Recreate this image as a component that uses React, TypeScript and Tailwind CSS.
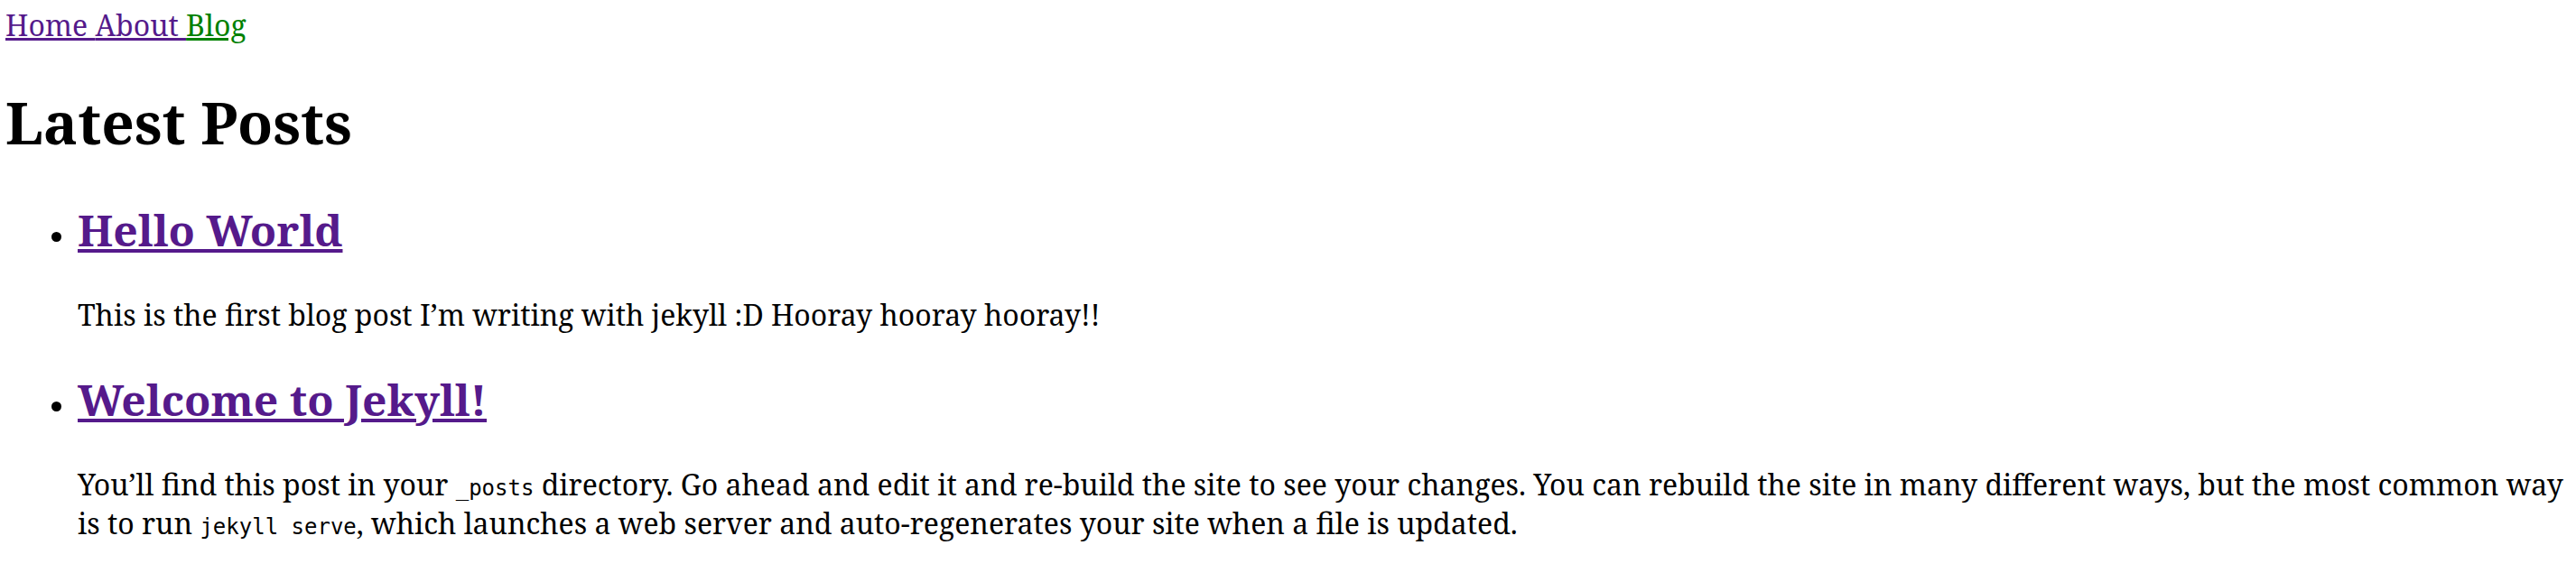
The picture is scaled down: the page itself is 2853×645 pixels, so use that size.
import React from "react";

const CODE = "font-['DejaVu_Sans_Mono',monospace] text-[24px]";

const POSTS = [
  {
    title: "Hello World",
    body: <>This is the first blog post I’m writing with jekyll :D Hooray hooray hooray!!</>,
  },
  {
    title: "Welcome to Jekyll!",
    body: (
      <>
        You’ll find this post in your <code className={CODE}>_posts</code> directory. Go ahead and edit it and re-build
        the site to see your changes. You can rebuild the site in many different ways, but the most common way is to
        run <code className={CODE}>jekyll serve</code>, which launches a web server and auto-regenerates your site when a
        file is updated.
      </>
    ),
  },
];

export default function App() {
  return (
    <div className="m-[6px] bg-white font-['Noto_Serif','DejaVu_Serif',serif] text-[32px] leading-[normal] text-black">
      {/* Nav */}
      <nav>
        <a href="#" className="text-[#551a8b] underline">Home </a>
        <a href="#" className="text-[#551a8b] underline">About </a>
        <a href="#" className="text-[#008000] underline">Blog</a>
      </nav>

      <h1 className="my-[43px] text-[64px] font-bold">Latest Posts</h1>

      {/* Posts */}
      <ul className="list-disc pl-[80px]">
        {POSTS.map((p) => (
          <li key={p.title}>
            <h2 className="my-[40px] text-[48px] font-bold">
              <a href="#" className="text-[#551a8b] underline">{p.title}</a>
            </h2>
            <p className="my-[32px]">{p.body}</p>
          </li>
        ))}
      </ul>
    </div>
  );
}
